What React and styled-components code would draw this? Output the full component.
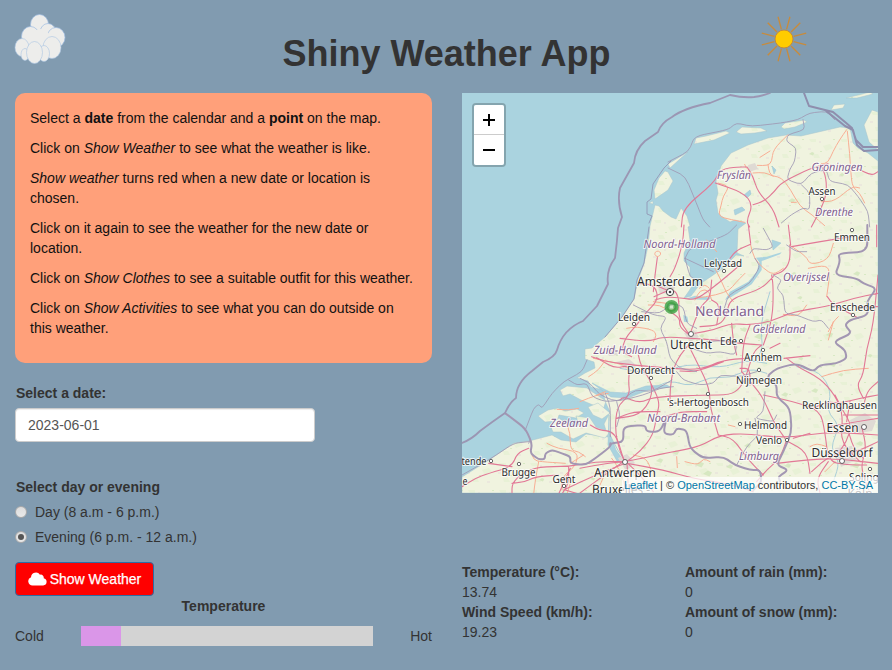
import React from 'react';
import styled, { createGlobalStyle } from 'styled-components';

const Global = createGlobalStyle`
  * { box-sizing: border-box; }
  body { margin: 0; background: #819bb0; color: #333; font: 14px/20px "Liberation Sans", Arial, sans-serif; }
`;
const Page = styled.div`width: 892px; height: 670px; overflow: hidden;`;
const Header = styled.header`
  display: grid; grid-template-columns: 100px 1fr 145px; height: 93px; align-items: start;
`;
const Title = styled.h1`
  margin: 34px 0 0; font-size: 36px; line-height: 40px; text-align: center;
  padding-left: 46px; white-space: nowrap;
`;
const CloudArt = styled.svg`display: block; margin: 12px 0 0 12px; width: 56px; height: 56px;`;
const SunArt = styled.svg`display: block; margin: 12px 0 0 9px; width: 56px; height: 56px;`;
const Columns = styled.main`display: grid; grid-template-columns: 417px 416px; column-gap: 30px; padding-left: 15px;`;
const Column = styled.section`display: flex; flex-direction: column; min-width: 0;`;
const Notice = styled.div`
  height: 270px; padding: 15px; border-radius: 10px; background: #ffa07a; color: #111;
  p { margin: 0 0 10px; white-space: nowrap; }
`;
const Label = styled.div`font-weight: bold; padding-left: 1px; margin-top: ${p => p.$top}px;`;
const DateInput = styled.input`
  width: 300px; height: 34px; margin-top: 5px; padding: 6px 12px; border: 1px solid #ccc; border-radius: 4px;
  background: #fff; color: #555; font: 14px/20px "Liberation Sans", Arial, sans-serif; box-shadow: inset 0 1px 1px rgba(0,0,0,.075);
`;
const Choice = styled.div`display: flex; align-items: center; gap: 8px; height: 20px; margin-top: 5px;`;
const Radio = styled.span`
  width: 12px; height: 12px; border-radius: 50%; border: 1px solid #aaa; display: grid; place-items: center;
  background: linear-gradient(#ddd, #e9e9e9);
  &::after { content: ""; width: 6px; height: 6px; border-radius: 50%; background: ${p => (p.$on ? '#555' : 'transparent')}; }
`;
const WeatherButton = styled.button`
  display: flex; align-items: center; justify-content: center; gap: 3px; width: 139px; height: 34px; margin-top: 15px;
  padding: 0; border: 1px solid #2e6da4; border-radius: 4px; background: #f00; color: #fff;
  font: 14px/20px "Liberation Sans", Arial, sans-serif; -webkit-text-stroke: .25px #fff;
`;
const GaugeTitle = styled.div`font-weight: bold; text-align: center;`;
const Gauge = styled.div`display: grid; grid-template-columns: 66px 292px 1fr; height: 20px; margin-top: 10px; > :last-child { text-align: right; }`;
const Track = styled.div`background: #d3d3d3; height: 20px;`;
const Fill = styled.div`width: 40px; height: 20px; background: #da96e8;`;
const MapFrame = styled.div`position: relative; height: 400px; overflow: hidden; background: #aad3df;`;
const MapArt = styled.svg`
  display: block; width: 416px; height: 400px;
  text {
    font-family: "Noto Sans", sans-serif; text-rendering: geometricPrecision; paint-order: stroke;
    stroke: rgba(255,255,255,.75); stroke-width: 2px; stroke-linejoin: round; fill: #2c2c2c;
  }
  text.region { fill: #80608f; font-style: italic; }
  text.country { fill: #80608f; }
  .lines { fill: none; stroke-linejoin: round; stroke-linecap: round; }
`;
const ZoomBox = styled.div`
  position: absolute; left: 10px; top: 10px; width: 34px; border: 2px solid rgba(0,0,0,.22); background-clip: padding-box; border-radius: 4px;
`;
const ZoomButton = styled.button`
  display: grid; place-items: center; width: 30px; height: 30px; padding: 0; border: 0; background: #fff;
  border-radius: ${p => (p.$first ? '2px 2px 0 0' : '0 0 2px 2px')};
  ${p => (p.$first ? 'border-bottom: 1px solid #ccc;' : '')}
`;
const Credit = styled.div`
  position: absolute; right: 0; bottom: 0; height: 16px; padding: 0 5px 0 2px; background: rgba(255,255,255,.72);
  font-size: 11px; line-height: 16px; white-space: nowrap; color: #333;
  span { color: #0078a8; }
`;
const Stats = styled.dl`display: grid; grid-template-columns: 223px 1fr; margin: 69px 0 0; white-space: nowrap;`;
const Stat = styled.div`
  height: 40px;
  dt { font-weight: bold; }
  dd { margin: 0; }
`;

const land = [
  'M878 161L868 153 858 148 853 143 850 128 840 127 801 136 786 135 768 138 748 145 731 153 721 166 716 181 718 193 716 200 718 213 721 216 730 222 735 220 746 223 738 229 737 253 744 256 736 255 722 269 700 284 691 296 684 298 689 291 696 280 690 276 690 267 684 261 684 253 690 240 688 227 690 226 687 216 681 208 676 219 671 217 663 211 659 206 655 205 650 226 648 246 644 264 638 280 634 299 622 317 605 337 592 348 585 349 585 359 594 362 595 368 585 373 577 378 588 381 591 387 603 390 605 401 610 412 604 424 608 437 586 434 576 442 561 440 552 435 529 441 514 443 489 460 462 477V493H878Z',
  'M668 172L673 181 668 190 655 199 654 190 659 178 665 171Z',
  'M668 164L688 152 681 158 670 168Z',
  'M694 144L696 138 706 136 726 131 730 133 714 140Z',
  'M736 132L742 127 761 128 767 131 755 133 741 134Z',
  'M781 127L785 123 804 120 807 122 795 127 784 129Z',
  'M831 110L834 105 845 104 843 108Z',
  'M846 98L870 92 873 94 857 98Z',
  'M878 112L872 110 864 125 869 142 878 150Z',
  'M560 390L567 386 587 388 597 395 606 401 603 410 593 405 581 400 570 394 563 396Z',
  'M538 416L548 410 558 408 565 411 577 409 584 413 576 418 559 415 557 421 545 422Z',
  'M550 425L559 418 568 425 579 425 576 416 590 418 596 427 610 432 605 438 586 433 573 439 561 432 553 432Z',
  'M588 407L598 403 610 413 602 419 593 415Z',
  'M649 203L653 201 653 204Z',
];
const water = [
  'M592 383L610 392 626 393 646 386 667 385 670 387 648 390 628 398 611 397Z',
  'M744 195L750 190 751 194 747 198ZM734 210L742 207 745 210 735 215ZM772 240L781 243 773 250ZM772 166L776 170 774 174Z',
  'M609 415L609 432 616 450 626 464 617 461 608 445Z',
];

/* Drawn at three times the map scale, one group per quarter of the map. */
const quarters = [
  {
    at: 'translate(668 93) scale(.33333)',
    orange: [
      'M360 125L315 170 312 205 300 218 268 217M300 215L304 240 316 250 340 253 368 290 395 340 432 365 470 398M276 193L306 174M255 240L290 238 316 250M536 110L515 140 495 175 480 210 460 212M538 115L545 180 550 260 556 285 575 300 590 330M460 326L500 325 552 280 575 285M150 270L185 280 165 310 160 335 150 370 190 380 230 388M370 328L385 328M230 214L235 225',
    ],
    red: [
      'M40 402L46 345 138 270 158 228 210 222 237 222M142 270L225 298 255 335 235 384 245 402M255 335L288 325 320 295 340 268 430 225 480 212M237 222L255 250 270 298 315 345 333 402M460 218L475 255 475 310 450 365 430 402M565 225L610 248 630 236',
    ],
    border: [
      'M0 225L52 250 85 330 105 380 125 402M0 207L62 175 80 130 180 110 205 90 250 100 340 90 390 80 425 60 475 55 500 80M405 80L410 110 360 125 355 145 385 165 380 205 365 230 357 260 400 275 430 240 475 230 485 265 540 275 570 310 600 355 605 402M400 275L425 300 425 350 405 345 370 365 340 390',
    ],
  },
  {
    at: 'translate(580 225) scale(.33333)',
    orange: [
      'M232 95L224 90 225 81 235 77 243 84 240 92 232 95M140 310L170 305 220 315 230 330 220 350M205 240L240 240 270 260 285 250M220 230L260 235M345 225L360 195 385 195 395 225M358 190L375 178 388 190M345 220L410 210 450 195 465 175 495 145M405 130L425 170 440 205 460 230M512 60L522 100 550 130 580 150 610 130M628 60L680 95 690 120 745 105 760 55M685 130L740 120 750 145 740 215M745 320L760 290 775 275M760 290L745 345M40 400L90 410 130 420M0 530L50 510 85 505M95 700L120 735 140 800M290 695L292 728M725 455L790 435 865 430M315 710L355 720 370 700 390 710M765 710L735 740M445 600L465 605',
      'M690 665L710 655 740 665M160 690L200 700 215 740M60 780L80 735M610 268L655 275 680 240M380 45L410 80',
    ],
    red: [
      'M312 0L308 60 285 130 270 155M232 98L225 150 220 200M175 175L225 180 235 225 200 260 170 300 135 340 125 380 155 395M225 180L260 195M225 225L260 215 310 220 345 225 390 195 445 150 480 120M222 215L245 205 280 190 298 220 295 270 310 305 330 330M270 260L300 280 298 305 328 330M330 328L345 285 365 240 390 220 395 165',
      'M120 340L205 350 250 335 330 340 410 345 475 355 545 360M330 355L300 390 280 430 270 490 270 545M325 360L350 410 380 470 390 510 390 545 415 630M35 395L80 410 160 420 270 430 360 435 430 405 500 400M300 438L350 440 430 410M545 360L520 380 500 450 480 490 450 510 380 510 220 515 180 535 130 515 120 525',
      'M345 325L400 315 450 295 510 300 570 290 640 260 740 245 820 220 894 205M575 150L580 185 578 280 550 360M580 155L540 195 450 220 440 270 420 300 360 305M455 295L460 350 470 390M395 225L420 240 410 300M630 60L630 110 610 140 580 150M625 0L632 60M512 55L505 0M512 58L470 75 450 100M635 65L720 50 815 35M510 300L490 350 485 440M570 370L600 355M612 400L690 392M742 215L760 240 810 265 835 280M890 0L890 65M894 150L880 300 860 370 850 450 830 480 850 520M835 245L894 245',
      'M50 398L70 410 105 430 150 420 145 470 150 510 110 545 105 620 120 680 135 710M175 390L185 430 215 470 215 520 180 570 110 580M210 470L240 530 230 570 220 630 180 680 140 710M240 580L300 560 380 560M110 580L160 560 240 560M0 730L80 715 135 710 280 680 360 665 420 630 500 625 610 640 750 620 894 630M140 715L250 735 340 760 460 780 520 800M140 712L180 750 220 800M130 710L60 760 0 804M415 630L460 640 500 700 550 750M485 440L520 480 550 520 580 590 615 640M550 510L640 530 720 555 735 620 745 710 800 720 860 720M480 430L510 430 510 480M620 400L660 430 720 460 765 510 790 570 780 650 840 710M620 645L600 700 560 735 530 770M625 650L680 680 690 745M590 715L680 705 760 700 894 715M790 570L894 570M750 605L830 590 894 580M765 510L790 560 815 600 800 650 770 690M845 605L860 670 840 730 870 804M800 600L820 670 850 700',
      'M640 640L690 625M695 740L750 690 830 680 894 650M700 550L740 530 780 535 840 520 894 510M850 550L860 500 894 470M800 590L810 530M745 710L710 760 720 804',
    ],
    border: [
      'M315 100L400 140M315 100L330 70 440 30 470 0M315 100L330 155 350 165M160 240L220 270 260 275 240 310 260 350 270 400 300 430 350 440M185 260L240 265 275 235 310 245 320 295 350 310M525 100L540 125 510 175 445 210 430 260M580 150L605 165 590 190 610 210 615 265 650 270 700 290 725 285 745 310M550 10L580 65 560 75 520 70 510 85M335 370L380 385 420 380 465 390 470 360 450 345 380 350M290 440L310 465 360 480 400 475 420 450 480 455 530 440M555 500L550 560 525 580 580 590 590 570M525 580L535 630 500 665 470 720M0 460L30 475 60 510 110 530 190 510 240 490 280 485M110 530L120 570 110 605M620 60L650 80 680 80',
    ],
    country: [
      'M862 0L862 80 775 85 780 110 765 150 830 160 850 175 890 190 860 230 865 270 810 285 795 300 815 325 760 350 795 375 800 400 770 415 720 420 700 440 650 415 590 430 560 455 590 480 590 515 630 550 635 620 610 680 590 720 625 735 595 755 600 770',
      'M91 660L95 655 130 650 130 605 195 600 200 620 240 620 260 575 250 625 280 630 290 610 320 615 330 670 370 700 430 695 465 720 510 735 540 735 545 770 520 795',
    ],
  },
  {
    at: 'translate(462 360) scale(.33333)',
    orange: [
      'M285 148L320 150 350 145M310 180L325 220 325 270 350 275 370 290M255 250L285 265 350 275 340 320 300 350 300 390M205 270L215 300 235 305 310 310M230 305L220 360 215 402M325 370L315 402M380 50L410 30 430 0M405 105L430 95M365 285L325 310',
    ],
    red: [
      'M150 402L150 370 180 340 230 320 320 320 400 305 490 305M290 402L325 325M0 380L40 355 80 340 150 320 165 280 200 265M80 310L150 320M320 320L320 370 300 402M305 390L400 345 490 310M150 370L190 365 220 350 290 345M495 310L500 402M310 390L350 402',
      'M385 195L410 210 460 215 485 300 490 305',
    ],
    border: [
      'M190 210L215 145 230 133 240 145 270 100 305 65 360 35 375 0M320 60L345 75 375 70 390 110 430 125 480 120 520 90 570 95 630 60M430 100L445 140 445 230M0 345L80 300 155 250 200 245M205 240L200 250',
    ],
    country: [
      'M130 160L190 205 210 250 205 280 230 298 248 298 250 280 270 270 300 280 325 290 325 310 370 315 400 295 445 260 445 250',
    ],
  },
];

/* Rounds the corners of "M x y L x y ..." polylines and keeps their ends. */
function smooth(d, amount = 0.5) {
  return d.split('M').filter(Boolean).map(part => {
    const n = part.replace('L', ' ').trim().split(/\s+/).map(Number);
    const pts = [];
    for (let i = 0; i + 1 < n.length; i += 2) pts.push([n[i], n[i + 1]]);
    const mix = (a, b, t) => `${(a[0] + (b[0] - a[0]) * t).toFixed(1)} ${(a[1] + (b[1] - a[1]) * t).toFixed(1)}`;
    let out = `M${pts[0].join(' ')}`;
    for (let i = 1; i < pts.length - 1; i += 1) {
      out += `L${mix(pts[i], pts[i - 1], amount)}Q${pts[i].join(' ')} ${mix(pts[i], pts[i + 1], amount)}`;
    }
    return `${out}L${pts[pts.length - 1].join(' ')}`;
  }).join('');
}

const cities = [
  ['Assen', 822, 195, 27, 11, 822, 199], ['Emmen', 852, 241, 36, 11, 852, 230], ['Lelystad', 723, 267, 38, 11, 724, 271],
  ['Amsterdam', 670, 286, 66, 13, 0, 0], ['Leiden', 634, 321, 32, 11, 634, 324], ['Utrecht', 691, 348.5, 42, 13, 691, 334],
  ['Ede', 728.5, 345, 17, 11, 741, 341], ['Arnhem', 763, 361, 38, 11, 763, 350], ['Enschede', 852.5, 311, 45, 11, 853, 315],
  ['Dordrecht', 651, 374, 48, 11, 651, 378], ['Nijmegen', 759, 384, 46, 11, 759, 370], ["'s-Hertogenbosch", 708, 405.5, 82, 11, 708, 394],
  ['Recklinghausen', 839.5, 408.5, 75, 11, 0, 0], ['Helmond', 765.5, 428.5, 43, 11, 740, 424], ['Venlo', 769, 444, 26, 11, 787, 440],
  ['Essen', 842.5, 432, 32, 12.5, 864, 427], ['Düsseldorf', 842, 456.5, 61, 12.5, 842, 461], ['Antwerpen', 625, 476.5, 62, 12.5, 625, 462],
  ['Brugge', 518.5, 476, 34, 11, 519, 464], ['Gent', 564, 482.5, 23, 11, 564, 486], ['tende', 474, 465, 25, 11, 491, 461],
  ['Solingen', 870, 481, 42, 11, 870, 469], ['Bruxelles -', 621, 494, 58, 13, 0, 0], ['e', 465, 485, 5, 11, 0, 0], ['Köln', 860, 498, 25, 13, 0, 0],
];
const regions = [
  ['Fryslân', 734, 179, 34], ['Groningen', 837, 171, 51], ['Drenthe', 834, 216, 38], ['Noord-Holland', 679.5, 248, 72],
  ['Overijssel', 806, 281, 46], ['Gelderland', 779, 333, 53], ['Zuid-Holland', 625, 354, 63], ['Zeeland', 569, 427, 38],
  ['Noord-Brabant', 683.5, 422, 73], ['Limburg', 759, 460, 40],
];

/* Small woodland patches, as [x, y, radius]. */
const woods = [
  [812, 154, 3], [792, 201, 4], [842, 175, 3], [767, 323, 6], [744, 330, 4], [759, 337, 5], [775, 324, 4], [733, 327, 4], [794, 274, 3],
  [702, 336, 3], [648, 240, 2], [640, 296, 2], [700, 465, 5], [708, 474, 5], [730, 467, 4], [676, 453, 4], [788, 466, 4], [815, 391, 4],
  [841, 375, 3], [860, 444, 4], [736, 404, 3], [785, 395, 4], [801, 359, 3], [833, 365, 4], [660, 461, 4], [644, 448, 3], [817, 217, 3],
  [857, 274, 4], [830, 335, 4], [800, 298, 3], [748, 446, 4], [856, 466, 5], [870, 356, 3], [593, 479, 3], [542, 480, 3], [757, 242, 3],
];

function CityMap() {
  return (
    <MapArt viewBox="462 93 416 400">
      <defs>
        <pattern id="fields" width="31" height="27" patternUnits="userSpaceOnUse">
          <rect width="31" height="27" fill="#f0f3df" />
          <path d="M3 4h7v3H5zM17 11l7-2 3 4-7 3zM7 19h5l2 4H8z" fill="#e8f1d6" />
          <path d="M22 22h3v2h-3zM13 6h2v2h-2zM2 13h3v2H2z" fill="#ebe8dd" />
          <path d="M27 4h2v1h-2zM14 16h2v1h-2z" fill="#d8eac4" />
        </pattern>
      </defs>
      <path d="M462 93H878V493H462Z" fill="#aad3df" />
      {land.map(d => <path key={d} d={d} fill="url(#fields)" stroke="#a7c5cd" strokeWidth=".5" />)}
      {woods.map(([x, y, r]) => <path key={`${x}-${y}`} d={`M${x - r} ${y}l${r} ${-r * 0.7} ${r * 0.8} ${r * 0.4} ${-r * 0.5} ${r * 0.8}z`} fill="#cfe4b8" opacity=".75" />)}
      {water.map(d => <path key={d} d={d} fill="#aad3df" stroke="#9dc4d4" strokeWidth=".5" />)}
      <g transform="translate(580 225) scale(.33333)">
        <path d="M528 98L538 112 530 140 505 170 450 200 435 225 455 215 515 178 545 135 545 108 600 88 605 82 560 95ZM310 270L322 275 325 292 312 290Z" fill="#aad3df" />
        <path d="M315 222L385 225 395 218 345 212Z" fill="#aad3df" />
        <path className="lines" stroke="#a9ced8" strokeWidth="3" d={smooth('M130 515L210 495 270 465 330 485 390 455 450 460 510 430 560 445M120 430L230 450 320 415 420 430 500 405 560 415M520 410L550 375 540 300 570 200M650 425L720 440 755 500 740 560 780 600 750 670 780 710 760 770M90 630L115 680 140 710')} />
      </g>
      <g fill="#dfdad4">
        <path d="M657 284l9-3 9 6-3 7-12-1zM748 165l7-2 3 6-9 3zM684 333l10-3 5 7-9 5zM850 420l15-7 11 8-4 10-19 3zM835 448l17-2 4 14-15 7zM618 458l9-4 8 9-9 8zM606 349l9-2 3 8-9 1zM616 362l13-3 8 7-12 3z" />
      </g>
      {quarters.map(q => (
        <g className="lines" key={q.at} transform={q.at}>
          <g stroke="#f8ae94" strokeWidth="3">{q.orange.map(d => <path key={d} d={smooth(d)} />)}</g>
          <g stroke="#e27896" strokeWidth="3.3">{q.red.map(d => <path key={d} d={smooth(d)} />)}</g>
          <g stroke="#9f98b4" strokeWidth="3" opacity=".85">{q.border.map(d => <path key={d} d={smooth(d, 0.3)} />)}</g>
          <g stroke="#a397b3" strokeWidth="6">{(q.country || []).map(d => <path key={d} d={smooth(d, 0.35)} />)}</g>
        </g>
      ))}
      <g className="lines">
        <path stroke="#8f8ead" strokeWidth="2" d="M804 93L809 106 825 110 845 126 853 130 857 145 864 151 878 150M825 110L833 112 845 122 852 128 856 140 863 147 878 147" />
        <path stroke="#9b96b3" strokeWidth="1.8" d="M462 443Q472 439 480 431Q492 422 505 413Q510 402 516 398Q516 383 532 371L543 362Q555 357 557 350Q563 329 583 321L597 306 608 284Q606 270 615 258Q617 243 618 228L622 217Q617 201 620 188L634 163Q635 150 645 141L658 132Q661 123 672 117Q684 108 710 103L730 95Q743 98 754 97Q762 96 770 93" />
        <path stroke="#918fb0" strokeWidth=".8" d="M649 223L652 216 647 214 647 202 651 199 653 184 664 168 671 161M649 227L644 263 637 280 634 299 622 317 605 337" />
      </g>
      {cities.map(([name, x, y, w, size, cx, cy]) => (
        <React.Fragment key={name + x}>
          {cx > 0 && <circle cx={cx} cy={cy} r={size > 12 ? 2.5 : 1.7} fill="#fff" stroke="#555" strokeWidth=".9" />}
          <text x={x - w / 2} y={y} fontSize={size} textLength={w} lengthAdjust="spacingAndGlyphs">{name}</text>
        </React.Fragment>
      ))}
      {regions.map(([name, x, y, w]) => <text className="region" key={name} x={x - w / 2} y={y} fontSize="11.5" textLength={w} lengthAdjust="spacingAndGlyphs">{name}</text>)}
      <text className="country" x="695" y="316" fontSize="13.5" textLength="69" lengthAdjust="spacingAndGlyphs">Nederland</text>
      <circle cx="670" cy="292" r="3.6" fill="#fff" stroke="#444" /><circle cx="670" cy="292" r="1.3" fill="#444" />
      <circle cx="671.5" cy="307" r="5" fill="#2f9a37" fillOpacity=".5" stroke="#2f9a37" strokeOpacity=".75" strokeWidth="4" />
      <path d="M670 305.500h3v3h-3z" fill="#d3e6cc" />
    </MapArt>
  );
}

const puffs = [
  [27.5, 12, 9, 10], [36, 20, 8, 9], [18.5, 24, 9, 10], [44, 25, 9, 10], [10, 35, 7, 9],
  [13, 42, 4, 6], [40, 35, 9, 11], [32, 41, 5.5, 8], [22.5, 40, 8, 11],
];

export default function App() {
  return (
    <Page>
      <Global />
      <Header>
        <CloudArt viewBox="0 0 56 56">
          {puffs.slice(0, 4).map(([x, y, rx, ry]) => <ellipse key={`${x}-${y}`} cx={x} cy={y + 0.5} rx={rx} ry={ry} fill="#ededeb" stroke="#9dbce1" strokeWidth=".7" />)}
          <ellipse cx="29" cy="30" rx="10" ry="13" fill="#ededeb" />
          {puffs.slice(4).map(([x, y, rx, ry]) => <ellipse key={`${x}-${y}`} cx={x} cy={y + 0.5} rx={rx} ry={ry} fill="#ededeb" stroke="#a9c4e2" strokeWidth=".6" />)}
        </CloudArt>
        <Title>Shiny Weather App</Title>
        <SunArt viewBox="0 0 56 56">
          <g stroke="#c88b3b" strokeWidth="1.3">
            {Array.from({ length: 12 }, (_, i) => <path key={i} d="M28 17V4" transform={`rotate(${i * 30 + 15} 28 27)`} />)}
          </g>
          <circle cx="28" cy="27" r="9" fill="#fc0" stroke="#c58a3b" />
        </SunArt>
      </Header>
      <Columns>
        <Column>
          <Notice>
            <p>Select a <b>date</b> from the calendar and a <b>point</b> on the map.</p>
            <p>Click on <i>Show Weather</i> to see what the weather is like.</p>
            <p><i>Show weather</i> turns red when a new date or location is<br />chosen.</p>
            <p>Click on it again to see the weather for the new date or<br />location.</p>
            <p>Click on <i>Show Clothes</i> to see a suitable outfit for this weather.</p>
            <p>Click on <i>Show Activities</i> to see what you can do outside on<br />this weather.</p>
          </Notice>
          <Label $top={20}>Select a date:</Label>
          <DateInput defaultValue="2023-06-01" />
          <Label $top={35}>Select day or evening</Label>
          <Choice><Radio />Day (8 a.m - 6 p.m.)</Choice>
          <Choice><Radio $on />Evening (6 p.m. - 12 a.m.)</Choice>
          <WeatherButton>
            <svg width="19" height="14" viewBox="0 0 19 14"><path fill="#fff" d="M4.7 13.500A4.300 4.300 0 0 1 3 5.200 5 5 0 0 1 12 2.700a3 3 0 0 1 3.700 3.500A3.700 3.700 0 0 1 15.200 13.500Z" /></svg>
            Show Weather
          </WeatherButton>
          <GaugeTitle>Temperature</GaugeTitle>
          <Gauge><span>Cold</span><Track><Fill /></Track><span>Hot</span></Gauge>
        </Column>
        <Column>
          <MapFrame>
            <CityMap />
            <ZoomBox>
              <ZoomButton $first aria-label="Zoom in"><svg width="14" height="14"><path d="M7 1v12M1 7h12" stroke="#000" strokeWidth="2" /></svg></ZoomButton>
              <ZoomButton aria-label="Zoom out"><svg width="14" height="14"><path d="M1 7h12" stroke="#000" strokeWidth="2" /></svg></ZoomButton>
            </ZoomBox>
            <Credit><span>Leaflet</span> | © <span>OpenStreetMap</span> contributors, <span>CC-BY-SA</span></Credit>
          </MapFrame>
          <Stats>
            <Stat><dt>Temperature (°C):</dt><dd>13.74</dd></Stat>
            <Stat><dt>Amount of rain (mm):</dt><dd>0</dd></Stat>
            <Stat><dt>Wind Speed (km/h):</dt><dd>19.23</dd></Stat>
            <Stat><dt>Amount of snow (mm):</dt><dd>0</dd></Stat>
          </Stats>
        </Column>
      </Columns>
    </Page>
  );
}
